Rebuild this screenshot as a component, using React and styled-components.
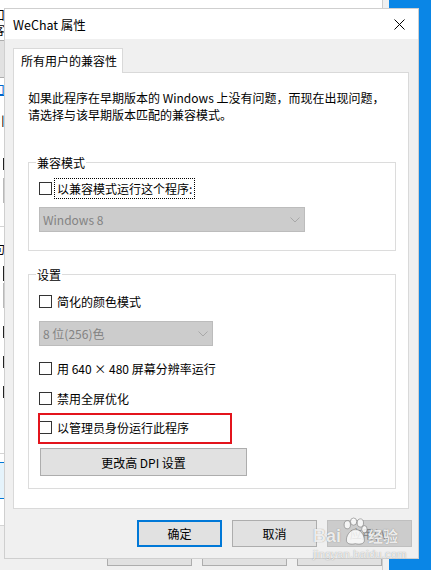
import React from 'react'
import styled, { createGlobalStyle } from 'styled-components'

const GlobalStyle = createGlobalStyle`
  html, body {
    margin: 0;
    padding: 0;
  }
  body {
    width: 431px;
    height: 570px;
    overflow: hidden;
    font-family: "Noto Sans CJK SC", "Noto Sans", sans-serif;
    font-size: 12px;
    color: #000;
  }
  * {
    box-sizing: border-box;
  }
`

const Desktop = styled.div`
  position: relative;
  width: 431px;
  height: 570px;
  background: #0a86e6;
  overflow: hidden;
`

/* ---------- window behind the dialog ---------- */

const BackWindow = styled.div`
  position: absolute;
  left: 0;
  top: 0;
  width: 389px;
  height: 570px;
  display: flex;
  background: #fff;
`

const BackMain = styled.div`
  flex: 1;
  display: flex;
  flex-direction: column;
`

const BackScroll = styled.div`
  width: 10px;
  border-left: 1px solid #cdcdcd;
  background: #f0f0f0;
`

const Glyph = styled.div`
  margin-top: ${p => p.$mt}px;
  margin-left: -7px;
  width: fit-content;
  height: 12px;
  line-height: 12px;
  color: ${p => p.$color || '#000'};
  border-bottom: ${p => (p.$link ? '1px solid #0066cc' : 'none')};
`

const GreyBlock = styled.div`
  margin-top: ${p => p.$mt}px;
  height: 38px;
  background: #e1e1e1;
  border: 1px solid #adadad;
  border-left: none;
`

const Stroke = styled.div`
  margin-top: ${p => p.$mt}px;
  margin-left: 3px;
  width: 1px;
  height: ${p => p.$h}px;
  background: ${p => p.$color || '#222'};
`

const Rule = styled.div`
  margin-top: ${p => p.$mt}px;
  height: 1px;
  background: #d4d4d4;
`

const SelectedRow = styled.div`
  margin-top: ${p => p.$mt}px;
  height: 37px;
  background: #e5f3fb;
  border-top: 1px solid #0078d7;
  border-bottom: 1px solid #0078d7;
`

const BackFooter = styled.div`
  flex: 1;
  display: flex;
  align-items: flex-end;
  gap: 10px;
  padding: 0 0 4px 107px;
  background: #f0f0f0;
`

const BackButton = styled.div`
  width: 85px;
  height: 23px;
  background: #e1e1e1;
  border: 1px solid #adadad;
`

/* ---------- dialog ---------- */

const Dialog = styled.div`
  position: absolute;
  left: 4px;
  top: 8px;
  width: 415px;
  height: 551px;
  display: flex;
  flex-direction: column;
  background: #f0f0f0;
  border: 1px solid #cfcfcf;
`

const TitleBar = styled.div`
  height: 30px;
  display: flex;
  align-items: center;
  background: #fff;
  padding-left: 8px;
`

const Title = styled.div`
  flex: 1;
  font-size: 12.5px;
`

const CloseBox = styled.div`
  width: 38px;
  height: 30px;
  display: flex;
  align-items: center;
  justify-content: center;
`

const Body = styled.div`
  flex: 1;
  display: flex;
  flex-direction: column;
  padding: 9px 9px 0 8px;
`

const TabStrip = styled.div`
  display: flex;
`

const Tab = styled.div`
  position: relative;
  z-index: 1;
  width: 110px;
  height: 25px;
  margin-bottom: -1px;
  padding-left: 7px;
  line-height: 23px;
  background: #fff;
  border: 1px solid #d9d9d9;
  border-bottom: none;
`

const Panel = styled.div`
  background: #fff;
  border: 1px solid #d9d9d9;
  padding: 16px 12px 19px 14px;
`

const Para = styled.p`
  margin: 0;
  line-height: 17px;
`

const GroupBox = styled.div`
  margin-top: ${p => p.$mt}px;
  display: flex;
  flex-direction: column;
  align-items: flex-start;
  border: 1px solid #dcdcdc;
  padding: 0 10px ${p => p.$pb}px 10px;
`

const Legend = styled.div`
  margin: -9px 0 0 -3px;
  padding: 0 1px;
  line-height: 17px;
  background: #fff;
`

const Row = styled.div`
  position: relative;
  margin-top: ${p => p.$mt}px;
  height: 21px;
  display: flex;
  align-items: center;
`

const Box = styled.div`
  width: 13px;
  height: 13px;
  border: 1px solid #333;
  background: #fff;
`

const Label = styled.span`
  margin-left: 3px;
  padding: 0 2px;
  line-height: 19px;
  white-space: nowrap;
  outline: ${p => (p.$focus ? '1px dotted #000' : 'none')};
  outline-offset: 0;
`

const Select = styled.div`
  margin-top: ${p => p.$mt}px;
  width: ${p => p.$w}px;
  height: 25px;
  display: flex;
  align-items: center;
  padding: 0 4px 0 3px;
  background: #cccccc;
  border: 1px solid #bcbcbc;
  color: #838383;
`

const SelectText = styled.span`
  flex: 1;
`

const Highlight = styled.div`
  position: absolute;
  left: -1px;
  top: -4px;
  width: 194px;
  height: 31px;
  border: 2px solid #e3141c;
  pointer-events: none;
`

const WideButton = styled.div`
  margin: ${p => p.$mt}px 0 0 1px;
  width: 207px;
  height: 28px;
  display: flex;
  align-items: center;
  justify-content: center;
  background: #e1e1e1;
  border: 1px solid #adadad;
`

const Footer = styled.div`
  display: flex;
  justify-content: flex-end;
  gap: 10px;
  margin-right: -3px;
  padding-top: 11px;
`

const Button = styled.div`
  width: 85px;
  height: 27px;
  display: flex;
  align-items: center;
  justify-content: center;
  background: ${p => (p.$disabled ? '#cccccc' : '#e1e1e1')};
  border: ${p => (p.$primary ? '2px solid #0078d7' : p.$disabled ? '1px solid #bfbfbf' : '1px solid #adadad')};
  color: ${p => (p.$disabled ? '#838383' : '#000')};
`

/* ---------- watermark ---------- */

const Watermark = styled.div`
  position: absolute;
  left: 313px;
  top: 516px;
  display: flex;
  flex-direction: column;
  color: rgba(255, 255, 255, 0.85);
  text-shadow: 0 0 1px rgba(90, 90, 90, 0.7);
  pointer-events: none;
`

const MarkTop = styled.div`
  display: flex;
  align-items: flex-end;
  height: 31px;
`

const MarkWord = styled.span`
  font-family: "Liberation Sans", Arial, sans-serif;
  font-weight: bold;
  font-size: 18px;
  line-height: 22px;
`

const MarkCn = styled.span`
  font-size: 15px;
  font-weight: bold;
  line-height: 22px;
`

const MarkUrl = styled.span`
  margin-top: 1px;
  font-family: "Liberation Sans", Arial, sans-serif;
  font-size: 11px;
  letter-spacing: 0.3px;
`

const CloseIcon = () => (
  <svg width="11" height="11" viewBox="0 0 11 11">
    <path d="M0.5 0.5 L10.5 10.5 M10.5 0.5 L0.5 10.5" stroke="#000" strokeWidth="1" fill="none" />
  </svg>
)

const Chevron = () => (
  <svg width="10" height="6" viewBox="0 0 10 6">
    <path d="M0.5 0.5 L5 5 L9.5 0.5" stroke="#a8a8a8" strokeWidth="1" fill="none" />
  </svg>
)

const Paw = () => (
  <svg width="27" height="31" viewBox="0 0 30 31">
    <g fill="rgba(255,255,255,0.8)" stroke="rgba(110,110,110,0.6)" strokeWidth="1">
      <ellipse cx="7" cy="8" rx="3.5" ry="4.5" />
      <ellipse cx="14" cy="4.5" rx="3.5" ry="4" />
      <ellipse cx="21.5" cy="6" rx="3.5" ry="4.5" />
      <ellipse cx="26" cy="13" rx="3" ry="4" />
      <path d="M6 25 C6 18 12 13 16 13 C21 13 26 19 26 25 C26 30 20 30 16 29 C12 30 6 30 6 25 Z" />
    </g>
  </svg>
)

const Check = ({ label, focus, mt }) => (
  <Row $mt={mt}>
    <Box />
    <Label $focus={focus}>{label}</Label>
  </Row>
)

const App = () => {
  return (
    <>
      <GlobalStyle />
      <Desktop>
        <BackWindow>
          <BackMain>
            <Glyph $mt={9}>口</Glyph>
            <Glyph $mt={3}>客</Glyph>
            <GreyBlock $mt={4} />
            <Glyph $mt={6} $color="#0066cc" $link>口</Glyph>
            <Glyph $mt={19}>引</Glyph>
            <Stroke $mt={31} $h={12} />
            <Stroke $mt={8} $h={25} $color="#b8b8b8" />
            <Rule $mt={23} />
            <Glyph $mt={16}>句</Glyph>
            <Stroke $mt={11} $h={15} />
            <Stroke $mt={2} $h={25} $color="#b8b8b8" />
            <Stroke $mt={18} $h={12} />
            <Stroke $mt={18} $h={12} />
            <Stroke $mt={18} $h={12} />
            <Rule $mt={55} />
            <SelectedRow $mt={8} />
            <Rule $mt={26} />
            <BackFooter>
              <BackButton />
              <BackButton />
              <BackButton />
            </BackFooter>
          </BackMain>
          <BackScroll />
        </BackWindow>

        <Dialog>
          <TitleBar>
            <Title>WeChat 属性</Title>
            <CloseBox>
              <CloseIcon />
            </CloseBox>
          </TitleBar>
          <Body>
            <TabStrip>
              <Tab>所有用户的兼容性</Tab>
            </TabStrip>
            <Panel>
              <Para>
                如果此程序在早期版本的 Windows 上没有问题，而现在出现问题，
                <br />
                请选择与该早期版本匹配的兼容模式。
              </Para>

              <GroupBox $mt={39} $pb={18}>
                <Legend>兼容模式</Legend>
                <Check label="以兼容模式运行这个程序:" focus mt={7} />
                <Select $mt={8} $w={266}>
                  <SelectText>Windows 8</SelectText>
                  <Chevron />
                </Select>
              </GroupBox>

              <GroupBox $mt={23} $pb={12}>
                <Legend>设置</Legend>
                <Check label="简化的颜色模式" mt={8} />
                <Select $mt={9} $w={174}>
                  <SelectText>8 位(256)色</SelectText>
                  <Chevron />
                </Select>
                <Check label="用 640 × 480 屏幕分辨率运行" mt={12} />
                <Check label="禁用全屏优化" mt={9} />
                <Row $mt={8}>
                  <Box />
                  <Label>以管理员身份运行此程序</Label>
                  <Highlight />
                </Row>
                <WideButton $mt={10}>更改高 DPI 设置</WideButton>
              </GroupBox>
            </Panel>
            <Footer>
              <Button $primary>确定</Button>
              <Button>取消</Button>
              <Button $disabled>应用(A)</Button>
            </Footer>
          </Body>
        </Dialog>

        <Watermark>
          <MarkTop>
            <MarkWord>Bai</MarkWord>
            <Paw />
            <MarkCn>经验</MarkCn>
          </MarkTop>
          <MarkUrl>jingyan.baidu.com</MarkUrl>
        </Watermark>
      </Desktop>
    </>
  )
}

export default App
